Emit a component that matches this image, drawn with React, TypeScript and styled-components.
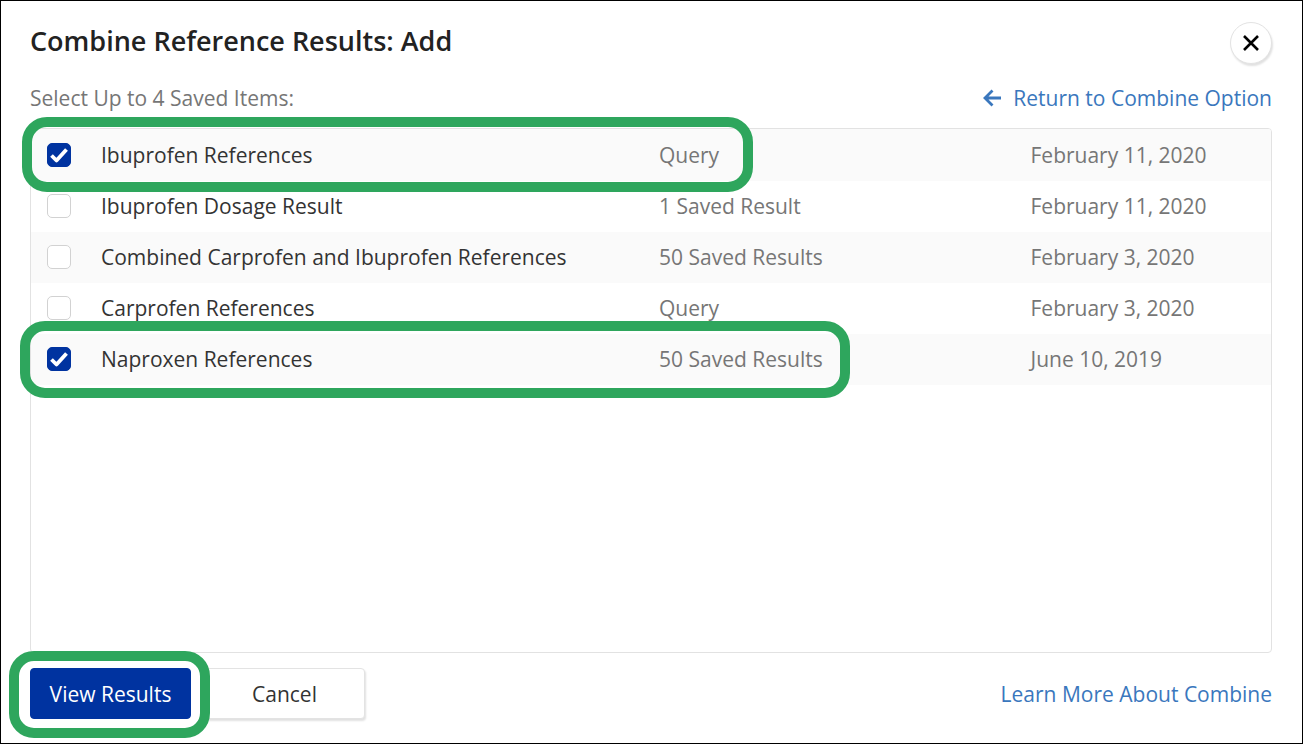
import React from "react";
import styled, { createGlobalStyle } from "styled-components";

type T_Saved = {
  name: string;
  kind: string;
  date: string;
  checked?: boolean;
};

const SAVED_ITEMS: T_Saved[] = [
  { name: "Ibuprofen References", kind: "Query", date: "February 11, 2020", checked: true },
  { name: "Ibuprofen Dosage Result", kind: "1 Saved Result", date: "February 11, 2020" },
  { name: "Combined Carprofen and Ibuprofen References", kind: "50 Saved Results", date: "February 3, 2020" },
  { name: "Carprofen References", kind: "Query", date: "February 3, 2020" },
  { name: "Naproxen References", kind: "50 Saved Results", date: "June 10, 2019", checked: true },
];

const GlobalStyle = createGlobalStyle`
  html, body {
    margin: 0;
    padding: 0;
    background: #fff;
  }
  * {
    box-sizing: border-box;
  }
`;

const Dialog = styled.div`
  position: relative;
  width: 1303px;
  height: 744px;
  padding: 0 30px 23px 29px;
  border: 1px solid #000;
  display: flex;
  flex-direction: column;
  background: #fff;
  font-family: "Open Sans", "Liberation Sans", sans-serif;
  overflow: hidden;
`;

const Header = styled.header`
  height: 82px;
  padding-top: 21px;
  display: flex;
  justify-content: space-between;
  align-items: flex-start;
`;

const Title = styled.h1`
  margin: 0;
  font-size: 27px;
  line-height: 38px;
  font-weight: 600;
  color: #222;
`;

const CloseButton = styled.button`
  width: 42px;
  height: 42px;
  padding: 0;
  border: 1px solid #e3e3e3;
  border-radius: 50%;
  background: #fff;
  box-shadow: 1px 2px 2px rgba(0, 0, 0, 0.12);
  display: flex;
  align-items: center;
  justify-content: center;
`;

const SubHeader = styled.div`
  height: 45px;
  padding-bottom: 15px;
  display: flex;
  justify-content: space-between;
  align-items: center;
`;

const Hint = styled.span`
  font-size: 21px;
  color: #767676;
`;

const BackLink = styled.a`
  display: flex;
  align-items: center;
  gap: 12px;
  font-size: 21px;
  color: #3a77bd;
`;

const ListBox = styled.div`
  flex: 1;
  border: 1px solid #e2e2e2;
  border-radius: 4px;
  overflow: hidden;
`;

const Row = styled.div<{ $shaded: boolean }>`
  height: 51px;
  padding-left: 16px;
  display: grid;
  grid-template-columns: 54px 558px 371.5px 1fr;
  align-items: center;
  font-size: 21px;
  background: ${(p) => (p.$shaded ? "#fafafa" : "#fff")};

  &:first-child {
    height: 52px;
    padding-top: 1px;
  }
`;

const CheckBox = styled.span<{ $checked?: boolean }>`
  width: 24px;
  height: 24px;
  margin-bottom: 2px;
  border-radius: 5px;
  border: 1px solid ${(p) => (p.$checked ? "#0033a0" : "#d2d2d2")};
  background: ${(p) => (p.$checked ? "#0033a0" : "#fff")};
  display: flex;
  align-items: center;
  justify-content: center;
`;

const Name = styled.span`
  padding-bottom: 2px;
  color: #333;
`;

const Muted = styled.span`
  padding-bottom: 2px;
  color: #767676;
`;

const Footer = styled.footer`
  height: 67px;
  padding-top: 15px;
  display: flex;
  align-items: flex-start;
  justify-content: space-between;
`;

const Buttons = styled.div`
  display: flex;
  gap: 13px;
`;

const Button = styled.button<{ $primary?: boolean }>`
  height: 51px;
  width: 161px;
  border-radius: 4px;
  font-family: inherit;
  font-size: 21px;
  border: 1px solid ${(p) => (p.$primary ? "#0033a0" : "#e3e3e3")};
  background: ${(p) => (p.$primary ? "#0033a0" : "#fff")};
  color: ${(p) => (p.$primary ? "#fff" : "#333")};
  box-shadow: ${(p) => (p.$primary ? "none" : "1px 2px 2px rgba(0, 0, 0, 0.12)")};
`;

const LearnLink = styled.a`
  font-size: 21px;
  line-height: 53px;
  color: #3a77bd;
`;

/* green callouts drawn over the screenshot content */
const Callout = styled.div<{ $x: number; $y: number; $w: number; $h: number }>`
  position: absolute;
  left: ${(p) => p.$x}px;
  top: ${(p) => p.$y}px;
  width: ${(p) => p.$w}px;
  height: ${(p) => p.$h}px;
  border: 10px solid #2ea65d;
  border-radius: 25px;
  pointer-events: none;
`;

const CheckMark = () => (
  <svg width="20" height="20" viewBox="0 0 20 20" fill="none">
    <path d="M2.5 10.5 L7.5 15.5 L17.5 4.5" stroke="#fff" strokeWidth="3.8" strokeLinejoin="round" />
  </svg>
);

export default function App(): React.JSX.Element {
  return (
    <>
      <GlobalStyle />
      <Dialog>
        <Header>
          <Title>Combine Reference Results: Add</Title>
          <CloseButton aria-label="Close">
            <svg width="18" height="18" viewBox="0 0 18 18" fill="none">
              <path d="M2 2 L16 16 M16 2 L2 16" stroke="#000" strokeWidth="2.6" />
            </svg>
          </CloseButton>
        </Header>
        <SubHeader>
          <Hint>Select Up to 4 Saved Items:</Hint>
          <BackLink>
            <svg width="18" height="18" viewBox="0 0 18 18" fill="none">
              <path d="M18 9 H2 M9.5 1.5 L2 9 L9.5 16.5" stroke="#3a77bd" strokeWidth="2.8" />
            </svg>
            Return to Combine Option
          </BackLink>
        </SubHeader>
        <ListBox>
          {SAVED_ITEMS.map((item, i) => (
            <Row key={item.name} $shaded={i % 2 === 0}>
              <CheckBox $checked={item.checked}>{item.checked && <CheckMark />}</CheckBox>
              <Name>{item.name}</Name>
              <Muted>{item.kind}</Muted>
              <Muted>{item.date}</Muted>
            </Row>
          ))}
        </ListBox>
        <Footer>
          <Buttons>
            <Button $primary>View Results</Button>
            <Button>Cancel</Button>
          </Buttons>
          <LearnLink>Learn More About Combine</LearnLink>
        </Footer>
        <Callout $x={21} $y={116} $w={731} $h={75} />
        <Callout $x={19} $y={320} $w={830} $h={77} />
        <Callout $x={8} $y={650} $w={201} $h={87} />
      </Dialog>
    </>
  );
}
